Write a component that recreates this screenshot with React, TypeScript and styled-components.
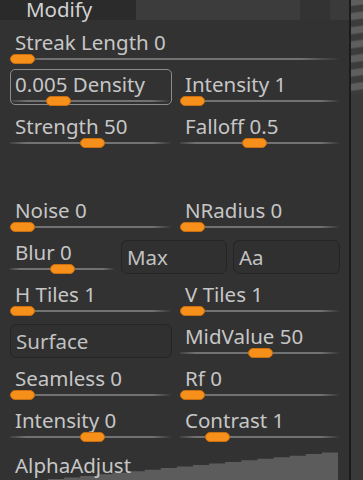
import styled, {createGlobalStyle} from "styled-components";
import * as React from "react";

const GlobalStyle = createGlobalStyle`
    html, body {
        margin: 0;
        padding: 0;
        background: #323232;
    }
    body {
        font-family: "Noto Sans", "DejaVu Sans", sans-serif;
    }
`;

const Page = styled.div`
    display: flex;
    width: 363px;
    height: 480px;
    overflow: hidden;
    background: #323232;
`;

const Panel = styled.div`
    width: 349px;
    display: flex;
    flex-direction: column;
    background: #323232;
`;

const Divider = styled.div`
    width: 2px;
    background: #1b1b1b;
`;

const Strip = styled.div`
    flex: 1;
    display: flex;
    flex-direction: column;
    background: #393939;
`;

const StripStripes = styled.div`
    height: 95px;
    background: repeating-linear-gradient(172deg, #5e5e5e 0 5px, #3c3c3c 7px 12px, #5e5e5e 14px);
`;

const Header = styled.div`
    height: 20px;
    display: flex;
    background: #2b2b2b;
    flex-shrink: 0;
`;

const HeaderBlock = styled.div<{ $w: number; $bg: string }>`
    width: ${p => p.$w}px;
    background: ${p => p.$bg};
`;

const Tab = styled.div`
    width: 75px;
    padding-left: 1px;
    font-size: 20.5px;
    line-height: 19px;
    color: #d2d2d2;
    white-space: nowrap;
`;

const Content = styled.div`
    padding: 4px 9px 0 10px;
    display: flex;
    flex-direction: column;
`;

const Row = styled.div<{ $cols: string; $gap?: number }>`
    display: grid;
    grid-template-columns: ${p => p.$cols};
    column-gap: ${p => p.$gap ?? 8}px;
    height: 42px;
`;

const Cell = styled.div<{ $boxed?: boolean }>`
    display: flex;
    flex-direction: column;
    ${p => p.$boxed && `
        margin-top: 3px;
        height: 36px;
        box-sizing: border-box;
        border: 1px solid #8c8c8c;
        border-radius: 5px;
        padding-top: 2px;
    `}
`;

const Label = styled.div<{ $boxed?: boolean }>`
    margin-top: ${p => (p.$boxed ? 0 : 6)}px;
    padding-left: ${p => (p.$boxed ? 4 : 5)}px;
    height: 24px;
    font-size: 20.5px;
    line-height: 24px;
    color: #c6c6c6;
    white-space: nowrap;
`;

const Track = styled.div`
    position: relative;
    height: 10px;
    &::before {
        content: "";
        position: absolute;
        left: 0;
        right: 0;
        top: 4px;
        height: 2px;
        background: linear-gradient(to right, rgba(120, 120, 120, 0.2), #727272 10%, #727272 88%, rgba(120, 120, 120, 0));
    }
`;

const Knob = styled.div`
    position: absolute;
    top: 0;
    width: 25px;
    height: 10px;
    box-sizing: border-box;
    border-radius: 5px;
    background: #f7901b;
    border: 1px solid #c96f0f;
`;

const Button = styled.div`
    margin-top: 6px;
    height: 34px;
    box-sizing: border-box;
    border: 1px solid #252525;
    border-radius: 6px;
    background: #303030;
    padding-left: 5px;
    font-size: 20.5px;
    line-height: 32px;
    color: #c2c2c2;
    white-space: nowrap;
`;

const GraphRow = styled.div`
    position: relative;
    height: 60px;
`;

const GraphLabel = styled.div`
    position: relative;
    z-index: 1;
    margin-top: 9px;
    padding-left: 5px;
    font-size: 20.5px;
    line-height: 24px;
    color: #c6c6c6;
`;

const Graph = styled.svg`
    position: absolute;
    left: 0;
    top: 0;
    width: 330px;
    height: 60px;
`;

type SliderProps = { label: string; pos: number; boxed?: boolean };

function Slider({label, pos, boxed}: SliderProps) {
    return (
        <Cell $boxed={boxed}>
            <Label $boxed={boxed}>{label}</Label>
            <Track>
                <Knob style={{left: `calc(${pos} * (100% - 25px))`}}/>
            </Track>
        </Cell>
    );
}

function stairs() {
    const pts: string[] = ["38,60", "38,35"];
    const steps = 18;
    const x0 = 38, x1 = 328, y0 = 35, y1 = 7;
    for (let i = 1; i <= steps; i++) {
        const x = x0 + ((x1 - x0) * i) / steps;
        const yPrev = y0 + ((y1 - y0) * (i - 1)) / steps;
        const y = y0 + ((y1 - y0) * i) / steps;
        pts.push(`${x.toFixed(1)},${yPrev.toFixed(1)}`);
        pts.push(`${x.toFixed(1)},${y.toFixed(1)}`);
    }
    pts.push("328,60");
    return pts.join(" ");
}

const TWO = "162px 160px";

export default function App() {
    return (
        <>
            <GlobalStyle/>
            <Page>
                <Panel>
                    <Header>
                        <HeaderBlock $w={25} $bg="#2a2a2a"/>
                        <Tab>Modify</Tab>
                        <HeaderBlock $w={35} $bg="#2b2b2b"/>
                        <HeaderBlock $w={165} $bg="#3c3c3c"/>
                        <HeaderBlock $w={30} $bg="#333333"/>
                        <HeaderBlock $w={19} $bg="#3a3a3a"/>
                    </Header>
                    <Content>
                        <Row $cols="330px">
                            <Slider label="Streak Length 0" pos={0}/>
                        </Row>
                        <Row $cols={TWO}>
                            <Slider label="0.005 Density" pos={0.26} boxed/>
                            <Slider label="Intensity 1" pos={0}/>
                        </Row>
                        <Row $cols={TWO}>
                            <Slider label="Strength 50" pos={0.51}/>
                            <Slider label="Falloff 0.5" pos={0.46}/>
                        </Row>
                        <Row $cols={TWO}/>
                        <Row $cols={TWO}>
                            <Slider label="Noise 0" pos={0}/>
                            <Slider label="NRadius 0" pos={0}/>
                        </Row>
                        <Row $cols="105px 106px 107px" $gap={6}>
                            <Slider label="Blur 0" pos={0.5}/>
                            <Button>Max</Button>
                            <Button>Aa</Button>
                        </Row>
                        <Row $cols={TWO}>
                            <Slider label="H Tiles 1" pos={0}/>
                            <Slider label="V Tiles 1" pos={0}/>
                        </Row>
                        <Row $cols={TWO}>
                            <Button>Surface</Button>
                            <Slider label="MidValue 50" pos={0.5}/>
                        </Row>
                        <Row $cols={TWO}>
                            <Slider label="Seamless 0" pos={0}/>
                            <Slider label="Rf 0" pos={0}/>
                        </Row>
                        <Row $cols={TWO}>
                            <Slider label="Intensity 0" pos={0.51}/>
                            <Slider label="Contrast 1" pos={0.185}/>
                        </Row>
                        <GraphRow>
                            <Graph viewBox="0 0 330 60">
                                <polygon points={stairs()} fill="#5c5c5c"/>
                            </Graph>
                            <GraphLabel>AlphaAdjust</GraphLabel>
                        </GraphRow>
                    </Content>
                </Panel>
                <Divider/>
                <Strip>
                    <StripStripes/>
                </Strip>
            </Page>
        </>
    );
}
